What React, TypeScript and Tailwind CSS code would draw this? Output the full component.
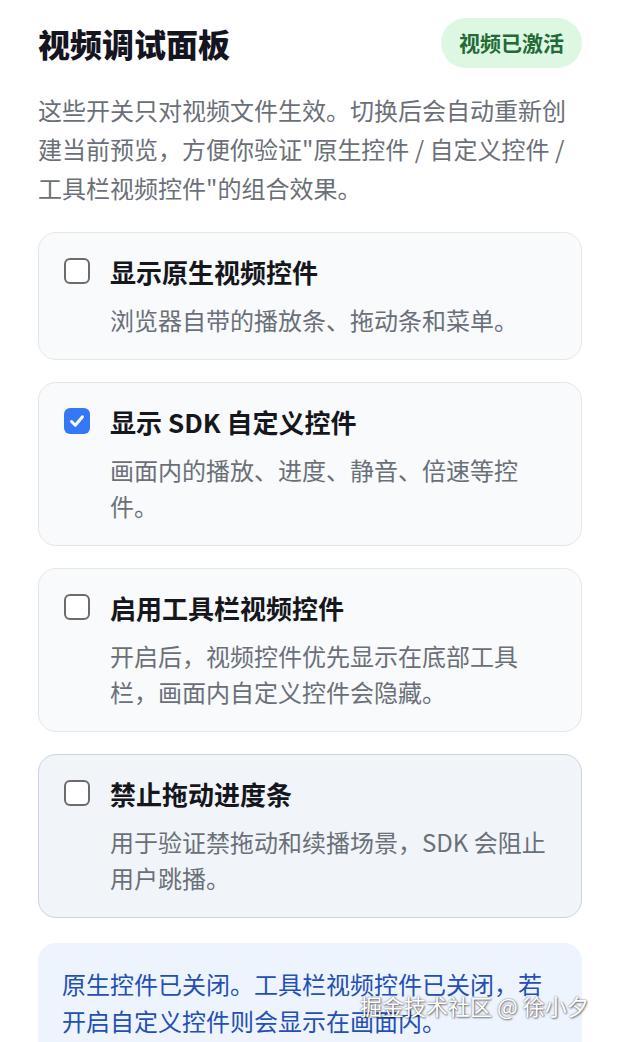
import React from "react";

const FONT = {
  fontFamily:
    '"Noto Sans CJK SC", "Noto Sans", "Liberation Sans", sans-serif',
};

type Opt = {
  title: string;
  desc: string;
  checked: boolean;
  active?: boolean;
};

const options: Opt[] = [
  {
    title: "显示原生视频控件",
    desc: "浏览器自带的播放条、拖动条和菜单。",
    checked: false,
  },
  {
    title: "显示 SDK 自定义控件",
    desc: "画面内的播放、进度、静音、倍速等控件。",
    checked: true,
  },
  {
    title: "启用工具栏视频控件",
    desc: "开启后，视频控件优先显示在底部工具栏，画面内自定义控件会隐藏。",
    checked: false,
  },
  {
    title: "禁止拖动进度条",
    desc: "用于验证禁拖动和续播场景，SDK 会阻止用户跳播。",
    checked: false,
    active: true,
  },
];

function Checkbox({ checked }: { checked: boolean }) {
  if (checked) {
    return (
      <div className="ml-[1px] mt-[4px] flex h-[26px] w-[26px] shrink-0 items-center justify-center rounded-[6px] bg-[#3478f6]">
        <svg width="18" height="18" viewBox="0 0 18 18" fill="none">
          <path
            d="M3.5 9.5 L7.3 13.2 L14.5 4.8"
            stroke="white"
            strokeWidth="3"
            strokeLinecap="round"
            strokeLinejoin="round"
          />
        </svg>
      </div>
    );
  }
  return (
    <div className="ml-[1px] mt-[4px] h-[26px] w-[26px] shrink-0 rounded-[6px] border-[2px] border-[#6b6b70] bg-white" />
  );
}

function OptionCard({ o }: { o: Opt }) {
  return (
    <div
      className={
        o.active
          ? "flex gap-5 rounded-[18px] border border-[#cdd3dc] bg-[#f1f5f9] px-6 py-[21px]"
          : "flex gap-5 rounded-[18px] border border-[#e3e7ec] bg-[#f8fafc] px-6 py-[21px]"
      }
    >
      <Checkbox checked={o.checked} />
      <div className="flex min-w-0 flex-1 flex-col gap-3">
        <div className="text-[26px] font-bold leading-[36px] text-[#16161d]">
          {o.title}
        </div>
        <div className="text-[24px] leading-[36px] text-[#6b7078]">
          {o.desc}
        </div>
      </div>
    </div>
  );
}

export default function App() {
  return (
    <div
      className="relative h-[1042px] w-[620px] overflow-hidden bg-white px-[38px] pt-[18px]"
      style={FONT}
    >
      <div className="flex h-[50px] items-center justify-between">
        <h1 className="text-[32px] font-extrabold leading-[40px] text-[#15151f]">
          视频调试面板
        </h1>
        <div className="flex h-[50px] items-center rounded-full bg-[#ddf7e3] px-[18px] text-[21px] font-bold text-[#226b37]">
          视频已激活
        </div>
      </div>

      <p className="mt-[22px] text-[24px] leading-[39px] text-[#6b7078]">
        这些开关只对视频文件生效。切换后会自动重新创建当前预览，方便你验证"原生控件 / 自定义控件 / 工具栏视频控件"的组合效果。
      </p>

      <div className="mt-[25px] flex flex-col gap-[22px]">
        {options.map((o) => (
          <OptionCard key={o.title} o={o} />
        ))}
      </div>

      <div className="mt-[25px] rounded-[18px] bg-[#eef4fe] px-6 pb-6 pt-[22px] text-[24px] leading-[37px] text-[#2450b4]">
        原生控件已关闭。工具栏视频控件已关闭，若开启自定义控件则会显示在画面内。
      </div>

      <div
        className="absolute left-[360px] top-[990px] text-[22px] leading-[30px] text-white"
        style={{
          textShadow:
            "0 0 2px rgba(0,0,0,0.55), 1px 1px 2px rgba(0,0,0,0.45)",
        }}
      >
        掘金技术社区 @ 徐小夕
      </div>
    </div>
  );
}
